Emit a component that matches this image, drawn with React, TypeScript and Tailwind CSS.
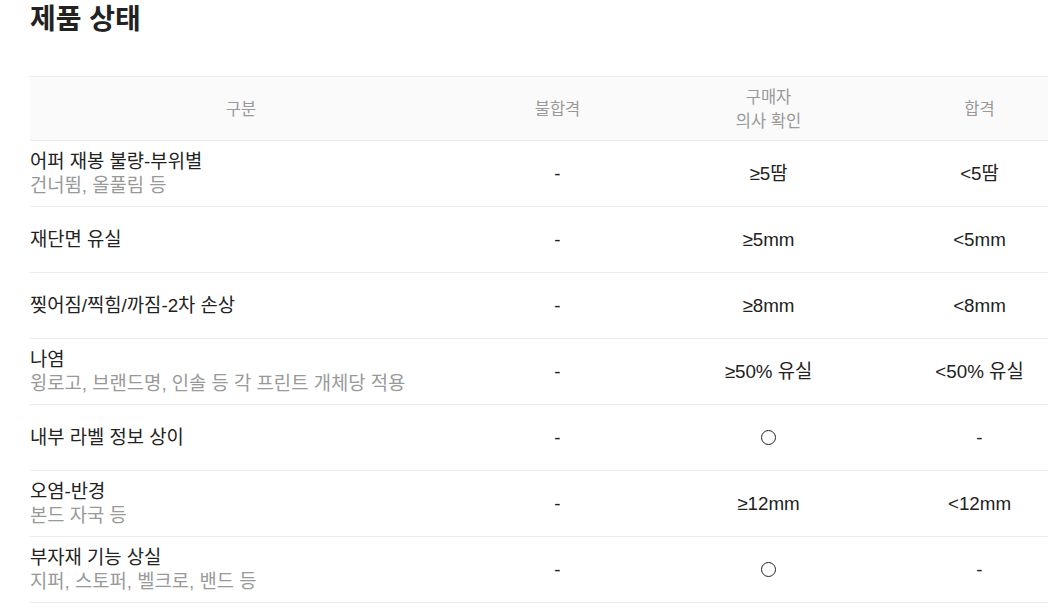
import * as React from "react";

type Row = {
  title: string;
  sub?: string;
  fail: string;
  confirm: string;
  pass: string;
};

const rows: Row[] = [
  { title: "어퍼 재봉 불량-부위별", sub: "건너뜀, 올풀림 등", fail: "-", confirm: "≥5땀", pass: "<5땀" },
  { title: "재단면 유실", fail: "-", confirm: "≥5mm", pass: "<5mm" },
  { title: "찢어짐/찍힘/까짐-2차 손상", fail: "-", confirm: "≥8mm", pass: "<8mm" },
  {
    title: "나염",
    sub: "윙로고, 브랜드명, 인솔 등 각 프린트 개체당 적용",
    fail: "-",
    confirm: "≥50% 유실",
    pass: "<50% 유실",
  },
  { title: "내부 라벨 정보 상이", fail: "-", confirm: "○", pass: "-" },
  { title: "오염-반경", sub: "본드 자국 등", fail: "-", confirm: "≥12mm", pass: "<12mm" },
  { title: "부자재 기능 상실", sub: "지퍼, 스토퍼, 벨크로, 밴드 등", fail: "-", confirm: "○", pass: "-" },
];

const font = "font-['Liberation_Sans','Noto_Sans_CJK_KR',sans-serif]";

function Cell({ value }: { value: string }) {
  if (value === "○") {
    return (
      <td className="text-center">
        <span className="inline-block h-[15px] w-[15px] translate-y-[1px] rounded-full border-[1.5px] border-[#222]" />
      </td>
    );
  }
  return <td className="text-center">{value}</td>;
}

export default function App() {
  return (
    <div className={`h-[613px] w-[1048px] overflow-hidden bg-white pl-[30px] text-[#222] ${font}`}>
      <h2 className="text-[28px] font-bold leading-[40px] text-[#222]">제품 상태</h2>
      <table className="mt-[36px] w-[1055px] table-fixed border-collapse">
        <colgroup>
          <col className="w-[422px]" />
          <col className="w-[211px]" />
          <col className="w-[211px]" />
          <col className="w-[211px]" />
        </colgroup>
        <thead>
          <tr className="h-[64px] border-y border-[#ececec] bg-[#fafafa] text-[16.5px] leading-[24px] text-[#999]">
            <th className="font-normal">구분</th>
            <th className="font-normal">불합격</th>
            <th className="font-normal">
              구매자
              <br />
              의사 확인
            </th>
            <th className="font-normal">합격</th>
          </tr>
        </thead>
        <tbody>
          {rows.map((r) => (
            <tr key={r.title} className="h-[66px] border-b border-[#ececec] text-[18.8px] leading-[24px]">
              <td className="align-middle">
                <div>{r.title}</div>
                {r.sub ? <div className="text-[#999]">{r.sub}</div> : null}
              </td>
              <Cell value={r.fail} />
              <Cell value={r.confirm} />
              <Cell value={r.pass} />
            </tr>
          ))}
        </tbody>
      </table>
    </div>
  );
}
